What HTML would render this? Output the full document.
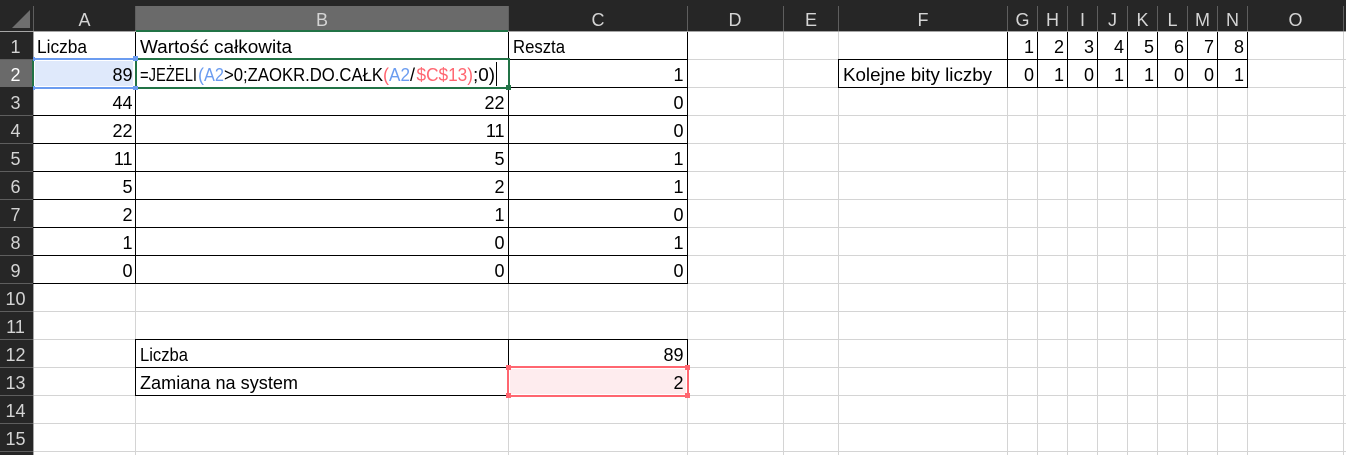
<!DOCTYPE html>
<html lang="pl"><head><meta charset="utf-8"><title>Arkusz</title>
<style>
html,body{margin:0;padding:0;background:#fff;width:1346px;height:455px;overflow:hidden}
svg{display:block}
text{font-family:"Liberation Sans",sans-serif;font-size:18px;fill:#000}
.h{fill:#d4d4d4;text-anchor:middle;font-size:18px}
.r{text-anchor:end}
</style></head><body>
<svg width="1346" height="455" viewBox="0 0 1346 455" xmlns="http://www.w3.org/2000/svg">
<!-- grid -->
<path shape-rendering="crispEdges" stroke="#d4d4d4" stroke-width="1" fill="none" d="M135.5 31V455M508.5 31V455M687.5 31V455M783.5 31V455M838.5 31V455M1007.5 31V455M1037.5 31V455M1067.5 31V455M1097.5 31V455M1127.5 31V455M1157.5 31V455M1187.5 31V455M1217.5 31V455M1247.5 31V455M1343.5 31V455M33 59.5H1346M33 87.5H1346M33 115.5H1346M33 143.5H1346M33 171.5H1346M33 199.5H1346M33 227.5H1346M33 255.5H1346M33 283.5H1346M33 311.5H1346M33 339.5H1346M33 367.5H1346M33 395.5H1346M33 423.5H1346M33 451.5H1346"/>
<!-- headers -->
<rect x="0" y="0" width="1346" height="31" fill="#262626"/>
<rect x="0" y="31" width="33" height="424" fill="#262626"/>
<rect x="136" y="6" width="372" height="25" fill="#6a6a6a"/>
<rect x="0" y="60" width="33" height="27" fill="#6a6a6a"/>
<polygon points="12,28 30,28 30,10" fill="#6e6e6e"/>
<path shape-rendering="crispEdges" stroke="#5e5e5e" stroke-width="1" fill="none" d="M33.5 6V31M135.5 6V31M508.5 6V31M687.5 6V31M783.5 6V31M838.5 6V31M1007.5 6V31M1037.5 6V31M1067.5 6V31M1097.5 6V31M1127.5 6V31M1157.5 6V31M1187.5 6V31M1217.5 6V31M1247.5 6V31M1343.5 6V31M0 59.5H33M0 115.5H33M0 143.5H33M0 171.5H33M0 199.5H33M0 227.5H33M0 255.5H33M0 283.5H33M0 311.5H33M0 339.5H33M0 367.5H33M0 395.5H33M0 423.5H33M0 451.5H33"/>
<rect x="0" y="31" width="1346" height="1" fill="#a6a6a6"/>
<rect x="33" y="31" width="1" height="424" fill="#a6a6a6"/>
<rect x="136" y="30" width="372" height="2" fill="#217346"/>
<rect x="32" y="60" width="2" height="27" fill="#217346"/>
<!-- column letters -->
<text class="h" x="84.5" y="26">A</text><text class="h" x="322" y="26">B</text><text class="h" x="598" y="26">C</text><text class="h" x="735" y="26">D</text><text class="h" x="811" y="26">E</text><text class="h" x="923" y="26">F</text><text class="h" x="1022.5" y="26">G</text><text class="h" x="1052.5" y="26">H</text><text class="h" x="1082.5" y="26">I</text><text class="h" x="1112.5" y="26">J</text><text class="h" x="1142.5" y="26">K</text><text class="h" x="1172.5" y="26">L</text><text class="h" x="1202.5" y="26">M</text><text class="h" x="1232.5" y="26">N</text><text class="h" x="1295.5" y="26">O</text>
<!-- row numbers -->
<text class="h" x="15.5" y="53">1</text><text class="h" x="15.5" y="81" style="fill:#fff">2</text><text class="h" x="15.5" y="109">3</text><text class="h" x="15.5" y="137">4</text><text class="h" x="15.5" y="165">5</text><text class="h" x="15.5" y="193">6</text><text class="h" x="15.5" y="221">7</text><text class="h" x="15.5" y="249">8</text><text class="h" x="15.5" y="277">9</text><text class="h" x="15.5" y="305">10</text><text class="h" x="15.5" y="333">11</text><text class="h" x="15.5" y="361">12</text><text class="h" x="15.5" y="389">13</text><text class="h" x="15.5" y="417">14</text><text class="h" x="15.5" y="445">15</text>
<!-- black borders -->
<path shape-rendering="crispEdges" stroke="#000" stroke-width="1" fill="none" d="M135.5 32V283M508.5 32V283M687.5 32V283M33 59.5H687M33 87.5H687M33 115.5H687M33 143.5H687M33 171.5H687M33 199.5H687M33 227.5H687M33 255.5H687M33 283.5H688M135 339.5H688M135 367.5H508M135 395.5H508M135.5 339V396M508.5 339V367M687.5 339V367M838 59.5H1248M838 87.5H1248M838.5 59V88M1007.5 32V88M1037.5 32V88M1067.5 32V88M1097.5 32V88M1127.5 32V88M1157.5 32V88M1187.5 32V88M1217.5 32V88M1247.5 32V88"/>
<!-- A2 selection -->
<rect x="35" y="61" width="98" height="25" fill="#dfe9fb"/>
<rect x="136" y="60" width="372" height="27" fill="#fff"/>
<rect x="35" y="58" width="98" height="2" fill="#6b9cf0"/>
<rect x="35" y="87" width="98" height="2" fill="#6b9cf0"/>
<!-- B2 edit -->
<rect x="137" y="58" width="372" height="2" fill="#217346"/>
<rect x="137" y="87" width="372" height="2" fill="#217346"/>
<rect x="135" y="60" width="2" height="27" fill="#217346"/>
<rect x="508" y="58" width="2" height="30" fill="#217346"/>
<rect x="506" y="85" width="5" height="5" fill="#217346"/>
<rect x="33" y="57" width="2" height="4" fill="#6b9cf0"/>
<rect x="33" y="86" width="2" height="4" fill="#6b9cf0"/>
<rect x="133" y="56" width="5" height="5" fill="#6b9cf0"/>
<rect x="133" y="86" width="5" height="4" fill="#6b9cf0"/>
<!-- C13 selection -->
<rect x="510" y="369" width="176" height="25" fill="#feecee"/>
<rect x="507" y="366" width="182" height="2" fill="#ff6670"/>
<rect x="507" y="395" width="182" height="2" fill="#ff6670"/>
<rect x="507" y="366" width="2" height="31" fill="#ff6670"/>
<rect x="687" y="366" width="2" height="31" fill="#ff6670"/>
<rect x="506" y="365" width="5" height="5" fill="#ff6670"/><rect x="685" y="365" width="5" height="5" fill="#ff6670"/><rect x="506" y="393" width="5" height="5" fill="#ff6670"/><rect x="685" y="393" width="5" height="5" fill="#ff6670"/>
<!-- text -->
<text x="37" y="53" textLength="50" lengthAdjust="spacingAndGlyphs">Liczba</text>
<text x="140" y="53" textLength="152" lengthAdjust="spacingAndGlyphs">Wartość całkowita</text>
<text x="513" y="53" textLength="52" lengthAdjust="spacingAndGlyphs">Reszta</text>
<text x="140" y="361" textLength="48" lengthAdjust="spacingAndGlyphs">Liczba</text>
<text x="140" y="389" textLength="158" lengthAdjust="spacingAndGlyphs">Zamiana na system</text>
<text x="843" y="81" textLength="149" lengthAdjust="spacingAndGlyphs">Kolejne bity liczby</text>
<!-- formula -->
<text x="140" y="81" textLength="57" lengthAdjust="spacingAndGlyphs">=JEŻELI</text>
<text x="198" y="81" style="fill:#6b9cf0">(</text>
<text x="204" y="81" textLength="20" lengthAdjust="spacingAndGlyphs" style="fill:#6b9cf0">A2</text>
<text x="224" y="81" textLength="159" lengthAdjust="spacingAndGlyphs">&gt;0;ZAOKR.DO.CAŁK</text>
<text x="383" y="81" style="fill:#ff6670">(</text>
<text x="389" y="81" textLength="21" lengthAdjust="spacingAndGlyphs" style="fill:#6b9cf0">A2</text>
<text x="410" y="81">/</text>
<text x="416.5" y="81" textLength="56.5" lengthAdjust="spacingAndGlyphs" style="fill:#ff6670">$C$13)</text>
<text x="473" y="81" textLength="22" lengthAdjust="spacingAndGlyphs">;0)</text>
<rect x="496" y="62" width="1" height="24" fill="#000"/>
<!-- numbers A -->
<text class="r" x="132.5" y="81">89</text><text class="r" x="132.5" y="109">44</text><text class="r" x="132.5" y="137">22</text><text class="r" x="132.5" y="165">11</text><text class="r" x="132.5" y="193">5</text><text class="r" x="132.5" y="221">2</text><text class="r" x="132.5" y="249">1</text><text class="r" x="132.5" y="277">0</text>
<!-- numbers B -->
<text class="r" x="504.5" y="109">22</text><text class="r" x="504.5" y="137">11</text><text class="r" x="504.5" y="165">5</text><text class="r" x="504.5" y="193">2</text><text class="r" x="504.5" y="221">1</text><text class="r" x="504.5" y="249">0</text><text class="r" x="504.5" y="277">0</text>
<!-- numbers C -->
<text class="r" x="683.5" y="81">1</text><text class="r" x="683.5" y="109">0</text><text class="r" x="683.5" y="137">0</text><text class="r" x="683.5" y="165">1</text><text class="r" x="683.5" y="193">1</text><text class="r" x="683.5" y="221">0</text><text class="r" x="683.5" y="249">1</text><text class="r" x="683.5" y="277">0</text>
<text class="r" x="683.5" y="361">89</text><text class="r" x="683.5" y="389">2</text>
<!-- bits -->
<text class="r" x="1034" y="53">1</text><text class="r" x="1064" y="53">2</text><text class="r" x="1094" y="53">3</text><text class="r" x="1124" y="53">4</text><text class="r" x="1154" y="53">5</text><text class="r" x="1184" y="53">6</text><text class="r" x="1214" y="53">7</text><text class="r" x="1244" y="53">8</text>
<text class="r" x="1034" y="81">0</text><text class="r" x="1064" y="81">1</text><text class="r" x="1094" y="81">0</text><text class="r" x="1124" y="81">1</text><text class="r" x="1154" y="81">1</text><text class="r" x="1184" y="81">0</text><text class="r" x="1214" y="81">0</text><text class="r" x="1244" y="81">1</text>
</svg>
</body></html>
